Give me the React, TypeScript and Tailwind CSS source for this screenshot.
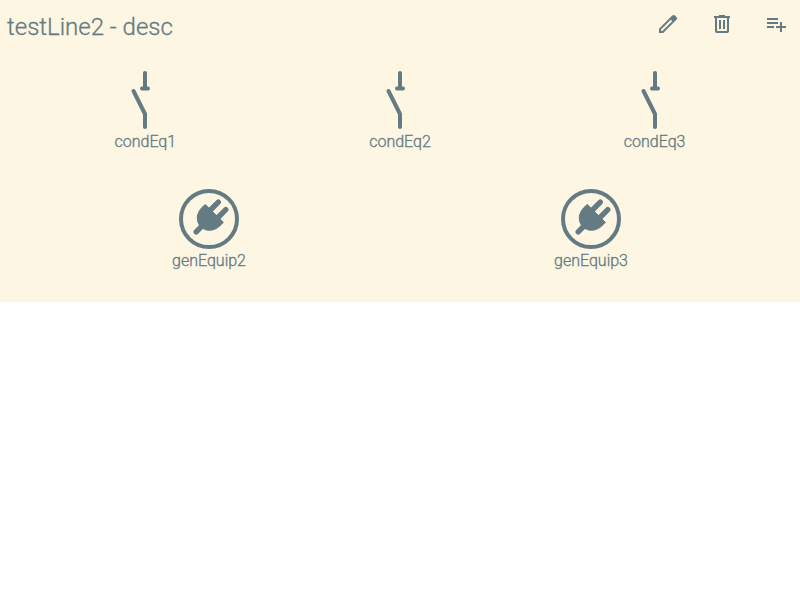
import React from "react";

function Switch() {
  return (
    <svg viewBox="0 0 64 64" className="block h-16 w-16" fill="none" stroke="currentColor" strokeWidth="4" strokeLinecap="round">
      <path d="M32 5V20M29 20.500H35M20.500 23L32 46V59" strokeLinejoin="round" />
    </svg>
  );
}

function Plug() {
  return (
    <svg viewBox="0 0 64 64" className="block h-16 w-16" fill="none" stroke="currentColor">
      <circle cx="32" cy="32" r="28" strokeWidth="4" />
      <path d="M19.200 44.800L25 39M34 22.500L41.300 15.200M41.500 30L48.800 22.700" strokeWidth="5.4" strokeLinecap="round" />
      <path d="M28.300 17.500L46.300 35.300C42 40.500 37.500 43.300 32.500 43.300C25.500 43.300 20.300 38 20.300 31C20.300 26 23.200 21.500 28.300 17.500Z" fill="currentColor" strokeWidth="1" strokeLinejoin="round" />
    </svg>
  );
}

function Equipment({ name, children }: { name: string; children: React.ReactNode }) {
  return (
    <div className="flex flex-col items-center">
      {children}
      <span className="h-[19px] text-base leading-[19px] font-light [-webkit-text-stroke:0.3px_currentColor]">{name}</span>
    </div>
  );
}

export default function App() {
  return (
    <main className="h-[302px] bg-[#fdf6e3] font-['Roboto',sans-serif] text-[#657b83]">
      <header className="flex h-12 items-center pl-[7px]">
        <h1 className="flex-1 pt-1.5 text-2xl font-light [-webkit-text-stroke:0.3px_currentColor]">testLine2 - desc</h1>
        <div className="flex gap-[30px] pr-3">
          <svg viewBox="0 0 24 24" className="h-6 w-6" fill="currentColor"><path d="M5 19h1.425L16.200 9.225 14.775 7.800 5 17.575zm-2 2v-4.250L16.200 3.575q.3-.275.663-.425t.762-.15.775.15.650.450L20.425 5q.3.275.438.650T21 6.400q0 .4-.137.763t-.438.662L7.250 21z" /></svg>
          <svg viewBox="0 0 24 24" className="h-6 w-6" fill="currentColor"><path d="M7 21q-.825 0-1.412-.587T5 19V6H4V4h5V3h6v1h5v2h-1v13q0 .825-.587 1.413T17 21zM17 6H7v13h10zM9 17h2V8H9zm4 0h2V8h-2z" fillRule="evenodd" /></svg>
          <svg viewBox="0 0 24 24" className="h-6 w-6" fill="currentColor"><path d="M14 10H3v2h11v-2zm0-4H3v2h11V6zm4 8v-4h-2v4h-4v2h4v4h2v-4h4v-2h-4zM3 16h7v-2H3v2z" /></svg>
        </div>
      </header>
      <section className="grid grid-cols-3 px-[18px] pt-5">
        <Equipment name="condEq1"><Switch /></Equipment>
        <Equipment name="condEq2"><Switch /></Equipment>
        <Equipment name="condEq3"><Switch /></Equipment>
      </section>
      <section className="grid grid-cols-2 px-[18px] pt-9">
        <Equipment name="genEquip2"><Plug /></Equipment>
        <Equipment name="genEquip3"><Plug /></Equipment>
      </section>
    </main>
  );
}
